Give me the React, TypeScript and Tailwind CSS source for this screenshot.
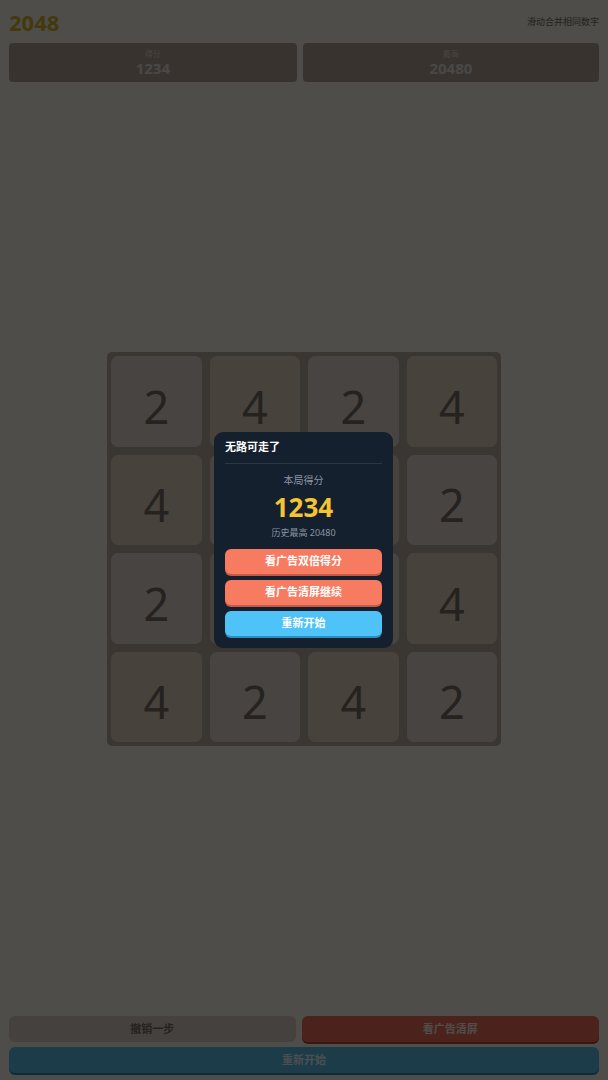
import React from "react";

const FONT = { fontFamily: '"Noto Sans", "Noto Sans CJK SC", sans-serif' };

const board = [
  [2, 4, 2, 4],
  [4, 2, 4, 2],
  [2, 4, 2, 4],
  [4, 2, 4, 2],
];

const tileBg: Record<number, string> = {
  2: "bg-[#e6dcd2]",
  4: "bg-[#e8d6c0]",
};

const ScoreBox = ({ label, value }: { label: string; value: string }) => (
  <div className="flex-auto h-[39px] rounded-[4px] bg-[#b5a697] flex flex-col items-center justify-center">
    <div className="text-[8px] leading-[10px] text-[#e4dad0]">{label}</div>
    <div className="text-[15px] leading-[18px] font-bold text-[#efe8e0]">{value}</div>
  </div>
);

const GameOverModal = () => (
  <div className="fixed inset-0 z-20 flex items-center justify-center">
    <div className="w-[179px] rounded-[9px] bg-[#14202e] px-[11px] pt-[8px] pb-[12px] mt-[-1px] ml-[-1px]">
      <div className="text-[11px] leading-[14px] font-bold text-white">无路可走了</div>
      <div className="h-px bg-[#2a3644] mt-[9px]" />
      <div className="mt-[10px] text-center text-[10px] leading-[12px] text-[#8b95a3]">本局得分</div>
      <div className="mt-[6px] text-center text-[26px] leading-[30px] font-bold text-[#f5c531]">1234</div>
      <div className="mt-[5px] text-center text-[9px] leading-[12px] text-[#8b95a3]">历史最高 20480</div>
      <div className="mt-[10px] flex flex-col gap-[6px]">
        <button className="h-[25px] rounded-[6px] bg-[#f67b61] shadow-[0_2px_0_#c75a46] text-[11px] font-bold text-white">
          看广告双倍得分
        </button>
        <button className="h-[25px] rounded-[6px] bg-[#f67b61] shadow-[0_2px_0_#c75a46] text-[11px] font-bold text-white">
          看广告清屏继续
        </button>
        <button className="h-[25px] rounded-[6px] bg-[#4fc3f7] shadow-[0_2px_0_#2b8fc0] text-[11px] font-bold text-white">
          重新开始
        </button>
      </div>
    </div>
  </div>
);

export default function App() {
  return (
    <div className="relative h-[1080px] w-[608px] bg-[#fbf7ef] flex flex-col" style={FONT}>
      <header className="px-[9px] pt-[8px]">
        <div className="flex items-center justify-between h-[28px]">
          <h1 className="text-[22px] font-bold leading-[28px] text-[#e0b62a]">2048</h1>
          <span className="text-[9px] text-[#776e65]">滑动合并相同数字</span>
        </div>
        <div className="mt-[7px] flex gap-[6px]">
          <ScoreBox label="得分" value="1234" />
          <ScoreBox label="最高" value="20480" />
        </div>
      </header>

      <main className="flex-1 flex items-center justify-center">
        <div className="w-[394px] h-[394px] rounded-[5px] bg-[#bbada0] p-[4px] grid grid-cols-4 grid-rows-4 gap-[8px]">
          {board.flat().map((v, i) => (
            <div
              key={i}
              className={`rounded-[7px] flex items-center justify-center pt-[10px] text-[45px] text-[#776e65] ${tileBg[v]}`}
            >
              {v}
            </div>
          ))}
        </div>
      </main>

      <footer className="px-[9px] pb-[7px] flex flex-col gap-[5px]">
        <div className="flex gap-[6px]">
          <button className="flex-auto h-[26px] rounded-[6px] bg-[#ddd3c8] text-[11px] font-bold text-[#776e65]">
            撤销一步
          </button>
          <button className="flex-auto h-[26px] rounded-[6px] bg-[#f0705a] shadow-[0_2px_0_#b84a38] text-[11px] font-bold text-[#fff4ef]">
            看广告清屏
          </button>
        </div>
        <button className="h-[26px] rounded-[6px] bg-[#5cc2ee] shadow-[0_2px_0_#2a8dbc] text-[11px] font-bold text-[#f4fbff]">
          重新开始
        </button>
      </footer>

      <div className="fixed inset-0 z-10 bg-black/[0.69]" />
      <GameOverModal />
    </div>
  );
}
